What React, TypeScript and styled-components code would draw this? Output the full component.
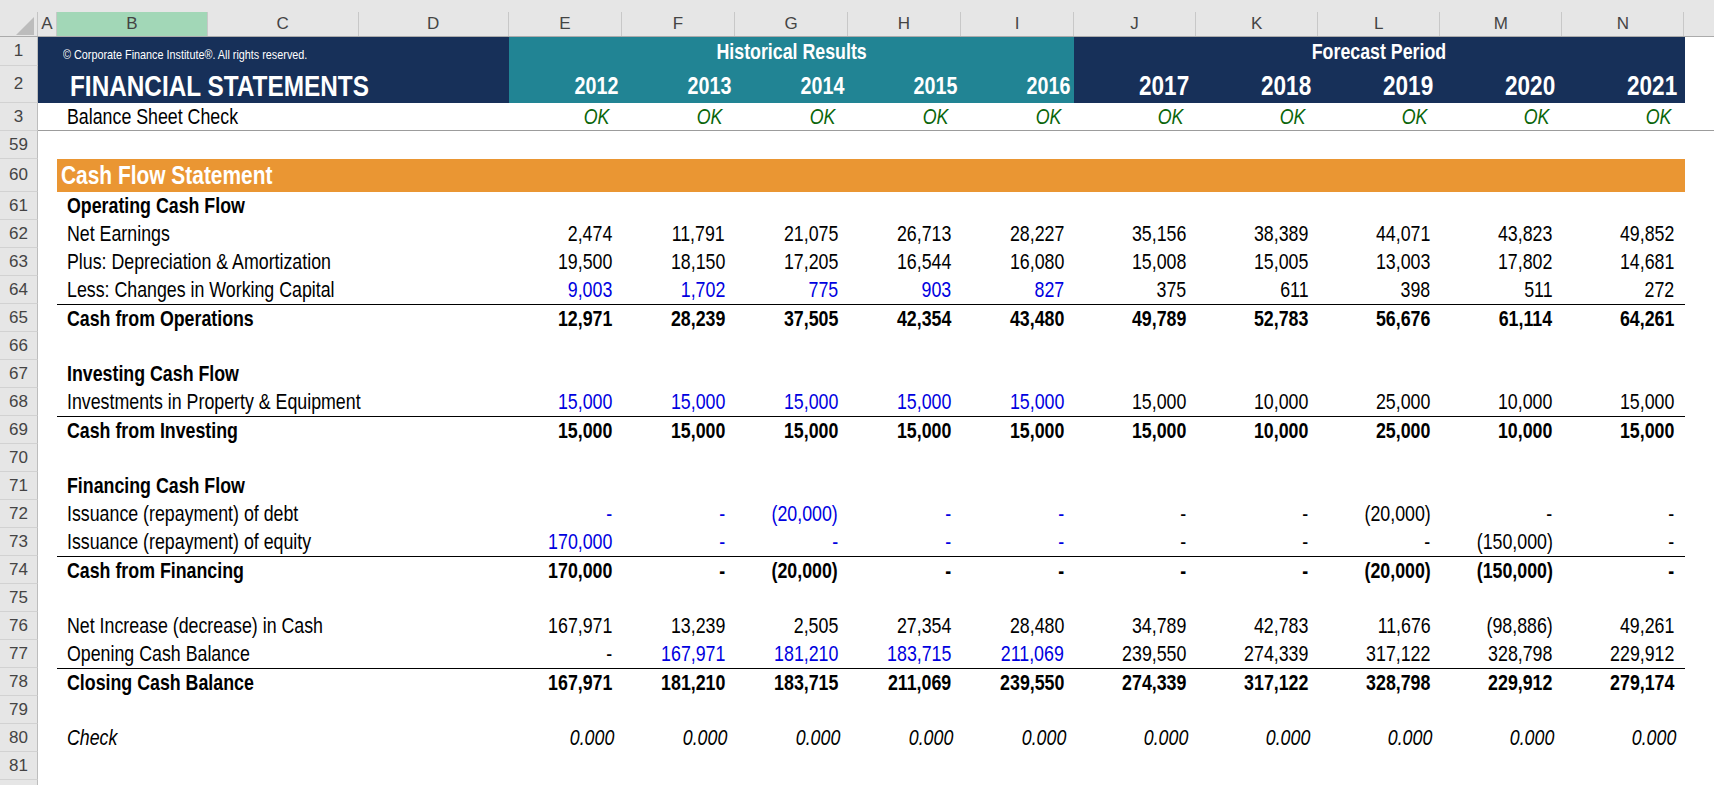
import React from "react";
import styled, { createGlobalStyle } from "styled-components";

const NARROW = `"Liberation Sans Narrow", "Arial Narrow", "Liberation Sans", Arial, sans-serif`;
const UI = `"Liberation Sans", Arial, sans-serif`;

const NAVY = "#173059";
const TEAL = "#218494";
const ORANGE = "#ea9633";
const GREEN = "#0a650a";
const BLUE = "#0000e0";
const HEAD_BG = "#e6e6e6";

const GRID = "38px 19px 452px 565px 610.5px 1fr";

const GlobalStyle = createGlobalStyle`
  * { box-sizing: border-box; }
  html, body { margin: 0; padding: 0; background: #fff; }
  body { font-family: ${NARROW}; color: #000; overflow: hidden; }
`;

/* Narrow face emulation: Arial Narrow is Arial at 82% width */
const Txt = styled.span<{ $origin?: "left" | "right" | "center" }>`
  display: inline-block;
  white-space: nowrap;
  transform: scaleX(0.82);
  transform-origin: ${(p) => p.$origin ?? "left"} center;
`;

const Sheet = styled.div`
  width: 1714px;
  height: 785px;
  overflow: hidden;
  background: #fff;
`;

const TopStrip = styled.div`
  height: 12px;
  background: ${HEAD_BG};
`;

const ColHeaderRow = styled.div`
  display: grid;
  grid-template-columns: ${GRID};
  height: 25px;
  background: ${HEAD_BG};
  border-bottom: 1px solid #ababab;
`;

const Corner = styled.div`
  border-right: 1px solid #c4c4c4;
  display: flex;
  align-items: flex-end;
  justify-content: flex-end;
  padding: 0 3px 1px 0;
`;

const ColGroup = styled.div<{ $cols: string }>`
  display: grid;
  grid-template-columns: ${(p) => p.$cols};
`;

const ColHead = styled.div<{ $selected?: boolean }>`
  display: flex;
  align-items: center;
  justify-content: center;
  font-family: ${UI};
  font-size: 17px;
  color: #444;
  border-right: 1px solid #c8c8c8;
  background: ${(p) => (p.$selected ? "#a2d7b7" : "transparent")};
`;

const Row = styled.div<{ $h: number }>`
  display: grid;
  grid-template-columns: ${GRID};
  height: ${(p) => p.$h}px;
`;

const Banner = styled.div`
  display: grid;
  grid-template-columns: ${GRID};
  grid-template-rows: 29px 37px;
`;

const RowNum = styled.div<{ $row?: number }>`
  grid-column: 1;
  grid-row: ${(p) => p.$row ?? "auto"};
  display: flex;
  align-items: center;
  justify-content: center;
  background: ${HEAD_BG};
  border-right: 1px solid #bdbdbd;
  border-bottom: 1px solid #d2d2d2;
  font-family: ${UI};
  font-size: 17px;
  color: #444;
`;

const NavyLeft = styled.div`
  grid-column: 2 / 4;
  grid-row: 1 / 3;
  background: ${NAVY};
  display: grid;
  grid-template-rows: 29px 37px;
  color: #fff;
`;

const Copyright = styled.div`
  display: flex;
  align-items: flex-end;
  padding: 0 0 5px 24.5px;
  font-size: 13.2px;
  line-height: 1;
`;

const Title = styled.div`
  display: flex;
  align-items: center;
  padding: 3px 0 0 32px;
  font-size: 29.7px;
  font-weight: bold;
  line-height: 1;
`;

const PeriodBlock = styled.div<{ $bg: string; $col: number }>`
  grid-column: ${(p) => p.$col};
  grid-row: 1 / 3;
  background: ${(p) => p.$bg};
  display: grid;
  grid-template-rows: 29px 37px;
  color: #fff;
`;

const PeriodTitle = styled.div`
  display: flex;
  align-items: center;
  justify-content: center;
  font-size: 21.7px;
  font-weight: bold;
  line-height: 1;
`;

const YearStrip = styled.div`
  display: grid;
  grid-template-columns: repeat(5, 1fr);
`;

const Year = styled.div<{ $size: number; $pad: number }>`
  display: flex;
  align-items: center;
  justify-content: flex-end;
  padding: 3px ${(p) => p.$pad}px 0 0;
  font-size: ${(p) => p.$size}px;
  font-weight: bold;
  line-height: 1;
`;

const Spacer = styled.div<{ $frozen?: boolean }>`
  border-bottom: ${(p) => (p.$frozen ? "1px solid #9c9c9c" : "none")};
`;

const Label = styled.div<{
  $bold?: boolean;
  $italic?: boolean;
  $rule?: boolean;
  $frozen?: boolean;
}>`
  display: flex;
  align-items: center;
  padding-left: 10px;
  font-size: 21.7px;
  line-height: 1;
  font-weight: ${(p) => (p.$bold ? "bold" : "normal")};
  font-style: ${(p) => (p.$italic ? "italic" : "normal")};
  border-top: ${(p) => (p.$rule ? "1px solid #000" : "none")};
  border-bottom: ${(p) => (p.$frozen ? "1px solid #9c9c9c" : "none")};
`;

const ValueGroup = styled.div<{ $rule?: boolean; $frozen?: boolean }>`
  display: grid;
  grid-template-columns: repeat(5, 1fr);
  border-top: ${(p) => (p.$rule ? "1px solid #000" : "none")};
  border-bottom: ${(p) => (p.$frozen ? "1px solid #9c9c9c" : "none")};
`;

const Value = styled.div<{
  $blue?: boolean;
  $bold?: boolean;
  $italic?: boolean;
  $green?: boolean;
  $pad: number;
}>`
  display: flex;
  align-items: center;
  justify-content: flex-end;
  padding-right: ${(p) => p.$pad}px;
  font-size: 21.7px;
  line-height: 1;
  font-weight: ${(p) => (p.$bold ? "bold" : "normal")};
  font-style: ${(p) => (p.$italic ? "italic" : "normal")};
  color: ${(p) => (p.$green ? GREEN : p.$blue ? BLUE : "#000")};
`;

const OrangeBand = styled.div`
  grid-column: 3 / 6;
  background: ${ORANGE};
  color: #fff;
  display: flex;
  align-items: center;
  padding-left: 4px;
  font-size: 25.5px;
  font-weight: bold;
  line-height: 1;
`;

type Kind = "item" | "section" | "total" | "check" | "blank";

interface Line {
  n: number;
  kind: Kind;
  label?: string;
  values?: string[];
  blue?: number[];
  hideNum?: boolean;
}

const F5 = ["15,000", "15,000", "15,000", "15,000", "15,000"];
const ALL5 = [0, 1, 2, 3, 4];

const lines: Line[] = [
  { n: 61, kind: "section", label: "Operating Cash Flow" },
  {
    n: 62,
    kind: "item",
    label: "Net Earnings",
    values: ["2,474", "11,791", "21,075", "26,713", "28,227", "35,156", "38,389", "44,071", "43,823", "49,852"],
  },
  {
    n: 63,
    kind: "item",
    label: "Plus: Depreciation & Amortization",
    values: ["19,500", "18,150", "17,205", "16,544", "16,080", "15,008", "15,005", "13,003", "17,802", "14,681"],
  },
  {
    n: 64,
    kind: "item",
    label: "Less: Changes in Working Capital",
    values: ["9,003", "1,702", "775", "903", "827", "375", "611", "398", "511", "272"],
    blue: ALL5,
  },
  {
    n: 65,
    kind: "total",
    label: "Cash from Operations",
    values: ["12,971", "28,239", "37,505", "42,354", "43,480", "49,789", "52,783", "56,676", "61,114", "64,261"],
  },
  { n: 66, kind: "blank" },
  { n: 67, kind: "section", label: "Investing Cash Flow" },
  {
    n: 68,
    kind: "item",
    label: "Investments in Property & Equipment",
    values: [...F5, "15,000", "10,000", "25,000", "10,000", "15,000"],
    blue: ALL5,
  },
  {
    n: 69,
    kind: "total",
    label: "Cash from Investing",
    values: [...F5, "15,000", "10,000", "25,000", "10,000", "15,000"],
  },
  { n: 70, kind: "blank" },
  { n: 71, kind: "section", label: "Financing Cash Flow" },
  {
    n: 72,
    kind: "item",
    label: "Issuance (repayment) of debt",
    values: ["-", "-", "(20,000)", "-", "-", "-", "-", "(20,000)", "-", "-"],
    blue: ALL5,
  },
  {
    n: 73,
    kind: "item",
    label: "Issuance (repayment) of equity",
    values: ["170,000", "-", "-", "-", "-", "-", "-", "-", "(150,000)", "-"],
    blue: ALL5,
  },
  {
    n: 74,
    kind: "total",
    label: "Cash from Financing",
    values: ["170,000", "-", "(20,000)", "-", "-", "-", "-", "(20,000)", "(150,000)", "-"],
  },
  { n: 75, kind: "blank" },
  {
    n: 76,
    kind: "item",
    label: "Net Increase (decrease) in Cash",
    values: ["167,971", "13,239", "2,505", "27,354", "28,480", "34,789", "42,783", "11,676", "(98,886)", "49,261"],
  },
  {
    n: 77,
    kind: "item",
    label: "Opening Cash Balance",
    values: ["-", "167,971", "181,210", "183,715", "211,069", "239,550", "274,339", "317,122", "328,798", "229,912"],
    blue: [1, 2, 3, 4],
  },
  {
    n: 78,
    kind: "total",
    label: "Closing Cash Balance",
    values: ["167,971", "181,210", "183,715", "211,069", "239,550", "274,339", "317,122", "328,798", "229,912", "279,174"],
  },
  { n: 79, kind: "blank" },
  {
    n: 80,
    kind: "check",
    label: "Check",
    values: Array(10).fill("0.000"),
  },
  { n: 81, kind: "blank" },
  { n: 82, kind: "blank", hideNum: true },
];

const HIST = ["2012", "2013", "2014", "2015", "2016"];
const FCST = ["2017", "2018", "2019", "2020", "2021"];

const CornerMark = () => (
  <svg width="18" height="18" viewBox="0 0 18 18">
    <polygon points="18,0 18,18 0,18" fill="#bcbcbc" />
  </svg>
);

const ValueCells: React.FC<{ line: Line; from: number; rule?: boolean }> = ({ line, from, rule }) => {
  const vals = (line.values ?? []).slice(from, from + 5);
  const bold = line.kind === "total";
  const italic = line.kind === "check";
  return (
    <ValueGroup $rule={rule}>
      {Array.from({ length: 5 }).map((_, i) => (
        <Value
          key={i}
          $pad={italic ? 8 : 10}
          $bold={bold}
          $italic={italic}
          $blue={line.blue?.includes(from + i)}
        >
          {vals[i] ? <Txt $origin="right">{vals[i]}</Txt> : null}
        </Value>
      ))}
    </ValueGroup>
  );
};

const BodyRow: React.FC<{ line: Line }> = ({ line }) => {
  const rule = line.kind === "total";
  return (
    <Row $h={28}>
      <RowNum>{line.hideNum ? "" : line.n}</RowNum>
      <Spacer />
      <Label
        $bold={line.kind === "section" || line.kind === "total"}
        $italic={line.kind === "check"}
        $rule={rule}
      >
        {line.label ? <Txt>{line.label}</Txt> : null}
      </Label>
      <ValueCells line={line} from={0} rule={rule} />
      <ValueCells line={line} from={5} rule={rule} />
      <Spacer />
    </Row>
  );
};

export default function App() {
  return (
    <>
      <GlobalStyle />
      <Sheet>
        <TopStrip />
        <ColHeaderRow>
          <Corner>
            <CornerMark />
          </Corner>
          <ColHead>A</ColHead>
          <ColGroup $cols="151px 150.5px 150.5px">
            <ColHead $selected>B</ColHead>
            <ColHead>C</ColHead>
            <ColHead>D</ColHead>
          </ColGroup>
          <ColGroup $cols="repeat(5, 1fr)">
            {["E", "F", "G", "H", "I"].map((c) => (
              <ColHead key={c}>{c}</ColHead>
            ))}
          </ColGroup>
          <ColGroup $cols="repeat(5, 1fr)">
            {["J", "K", "L", "M", "N"].map((c) => (
              <ColHead key={c}>{c}</ColHead>
            ))}
          </ColGroup>
          <div />
        </ColHeaderRow>

        <Banner>
          <RowNum $row={1}>1</RowNum>
          <RowNum $row={2}>2</RowNum>
          <NavyLeft>
            <Copyright>
              <Txt>© Corporate Finance Institute®. All rights reserved.</Txt>
            </Copyright>
            <Title>
              <Txt>FINANCIAL STATEMENTS</Txt>
            </Title>
          </NavyLeft>
          <PeriodBlock $bg={TEAL} $col={4}>
            <PeriodTitle>
              <Txt $origin="center">Historical Results</Txt>
            </PeriodTitle>
            <YearStrip>
              {HIST.map((y) => (
                <Year key={y} $size={24} $pad={4}>
                  <Txt $origin="right">{y}</Txt>
                </Year>
              ))}
            </YearStrip>
          </PeriodBlock>
          <PeriodBlock $bg={NAVY} $col={5}>
            <PeriodTitle>
              <Txt $origin="center">Forecast Period</Txt>
            </PeriodTitle>
            <YearStrip>
              {FCST.map((y) => (
                <Year key={y} $size={27.5} $pad={7}>
                  <Txt $origin="right">{y}</Txt>
                </Year>
              ))}
            </YearStrip>
          </PeriodBlock>
        </Banner>

        <Row $h={28}>
          <RowNum>3</RowNum>
          <Spacer $frozen />
          <Label $frozen>
            <Txt>Balance Sheet Check</Txt>
          </Label>
          <ValueGroup $frozen>
            {HIST.map((y) => (
              <Value key={y} $pad={13} $italic $green>
                <Txt $origin="right">OK</Txt>
              </Value>
            ))}
          </ValueGroup>
          <ValueGroup $frozen>
            {FCST.map((y) => (
              <Value key={y} $pad={13} $italic $green>
                <Txt $origin="right">OK</Txt>
              </Value>
            ))}
          </ValueGroup>
          <Spacer $frozen />
        </Row>

        <Row $h={28}>
          <RowNum>59</RowNum>
        </Row>

        <Row $h={33}>
          <RowNum>60</RowNum>
          <Spacer />
          <OrangeBand>
            <Txt>Cash Flow Statement</Txt>
          </OrangeBand>
        </Row>

        {lines.map((l) => (
          <BodyRow key={l.n} line={l} />
        ))}
      </Sheet>
    </>
  );
}
